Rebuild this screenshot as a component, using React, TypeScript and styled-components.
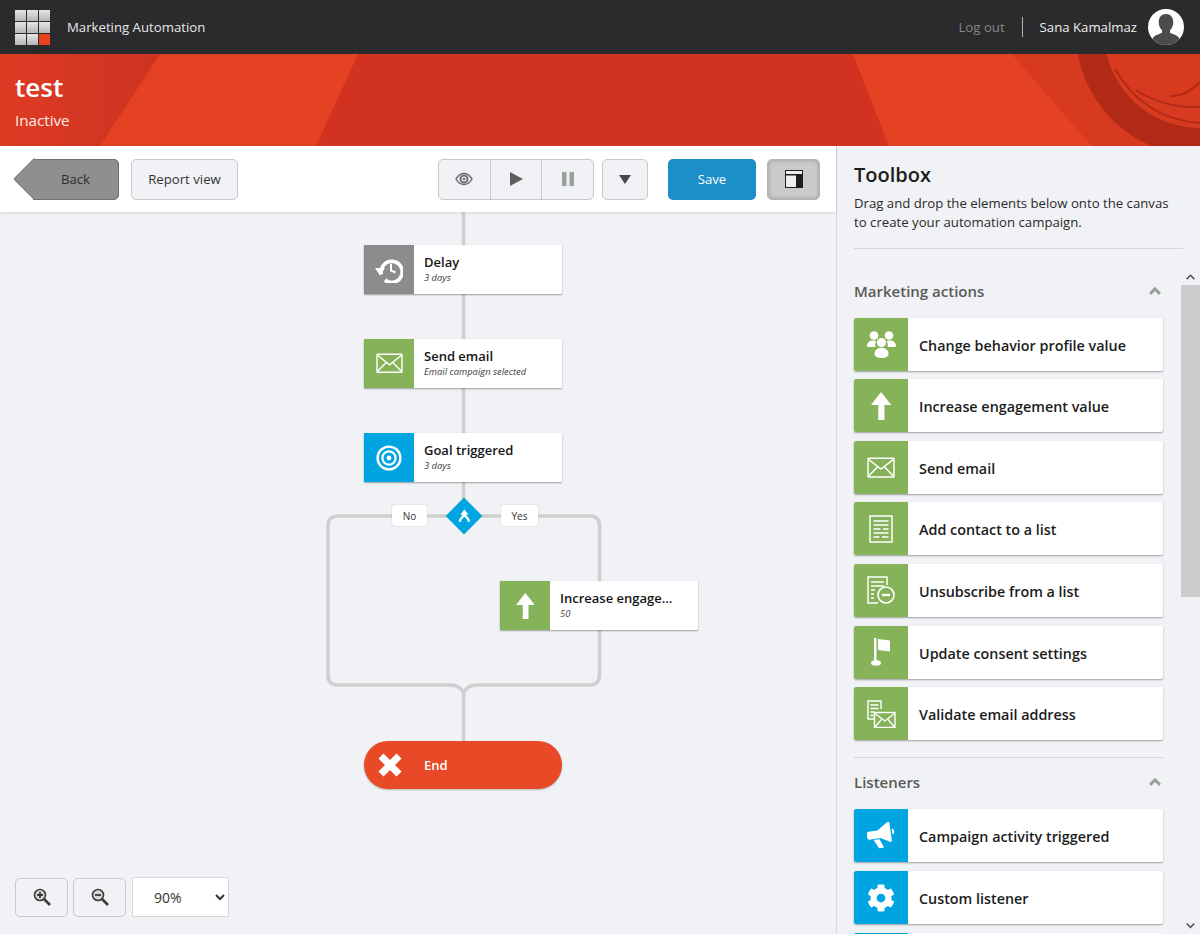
import React from 'react';
import styled, { createGlobalStyle } from 'styled-components';
import { FaCog } from 'react-icons/fa';

const GREEN = '#86b359';
const BLUE = '#00a4e1';
const GREY = '#8c8c8c';
const WIRE = '#cfcfcf';

const GlobalStyle = createGlobalStyle`
  html, body {
    margin: 0;
    padding: 0;
    height: 100%;
    overflow: hidden;
  }
  body {
    font-family: "Open Sans", "Liberation Sans", sans-serif;
    color: #1c1c1c;
    background: #f1f2f5;
  }
  * {
    box-sizing: border-box;
  }
`;

const Page = styled.div`
  display: flex;
  flex-direction: column;
  width: 1200px;
  height: 934px;
  overflow: hidden;
`;

const TopBar = styled.header`
  display: flex;
  align-items: center;
  height: 54px;
  padding: 0 16px 0 15px;
  background: #2b2b2d;
  flex-shrink: 0;
`;

const LogoGrid = styled.div`
  display: grid;
  grid-template-columns: repeat(3, 11px);
  grid-auto-rows: 11px;
  gap: 1px;
  margin-right: 17px;
`;

const LogoCell = styled.span<{ $accent?: boolean }>`
  background: ${(p) => (p.$accent ? '#e8431f' : 'linear-gradient(#e6e6e6, #b5b5b5)')};
`;

const AppName = styled.span`
  font-size: 13.2px;
  color: #e6e8ea;
`;

const UserArea = styled.div`
  display: flex;
  align-items: center;
  margin-left: auto;
`;

const LogOut = styled.a`
  font-size: 13.2px;
  color: #858585;
  padding-right: 17px;
  border-right: 1px solid #b5b5b5;
  line-height: 20px;
  margin-right: 17px;
`;

const UserName = styled.span`
  font-size: 13.2px;
  color: #eeeeee;
  margin-right: 11px;
`;

const Avatar = styled.svg`
  width: 36px;
  height: 36px;
  display: block;
`;

const Hero = styled.section`
  position: relative;
  height: 92px;
  padding: 16px 15px 0;
  background: #d23321;
  overflow: hidden;
  flex-shrink: 0;
`;

const HeroArt = styled.svg`
  position: absolute;
  left: 0;
  top: 0;
`;

const HeroTitle = styled.h1`
  position: relative;
  margin: 0;
  font-size: 26px;
  font-weight: 600;
  line-height: 34px;
  color: #ffffff;
`;

const HeroStatus = styled.div`
  position: relative;
  margin-top: 6px;
  font-size: 15.2px;
  line-height: 20px;
  color: #fbe9e4;
`;

const Body = styled.div`
  display: flex;
  flex: 1;
  min-height: 0;
`;

const Workspace = styled.main`
  display: flex;
  flex-direction: column;
  width: 837px;
  border-right: 1px solid #d9d9d9;
`;

const Toolbar = styled.div`
  display: flex;
  align-items: center;
  height: 66px;
  padding: 0 16px 0 33px;
  background: #ffffff;
  box-shadow: 0 1px 3px rgba(0, 0, 0, 0.12);
  position: relative;
  z-index: 2;
  flex-shrink: 0;
`;

const BackButton = styled.button`
  position: relative;
  width: 86px;
  height: 41px;
  margin-right: 12px;
  padding: 0;
  background: #8f8f8f;
  border: 1px solid #707070;
  border-left: 0;
  border-radius: 0 5px 5px 0;
  font: 13.2px "Open Sans", sans-serif;
  color: #2e2e2e;

  &::before {
    content: '';
    position: absolute;
    left: -14.5px;
    top: 4.5px;
    width: 29px;
    height: 29px;
    background: #8f8f8f;
    border-left: 1px solid #707070;
    border-bottom: 1px solid #707070;
    transform: rotate(45deg);
    border-radius: 0 0 0 3px;
  }

  span {
    position: relative;
  }
`;

const ToolButton = styled.button<{ $width: number }>`
  display: flex;
  align-items: center;
  justify-content: center;
  width: ${(p) => p.$width}px;
  height: 41px;
  padding: 0;
  background: #f1f2f5;
  border: 1px solid #c9c9c9;
  border-radius: 5px;
  font: 13.2px "Open Sans", sans-serif;
  color: #333333;
`;

const ButtonGroup = styled.div`
  display: flex;
  width: 156px;
  margin-left: auto;
  margin-right: 8px;
  height: 41px;
  border: 1px solid #c9c9c9;
  border-radius: 5px;
  background: #f1f2f5;
`;

const GroupButton = styled.button`
  display: flex;
  align-items: center;
  justify-content: center;
  flex: 1;
  padding: 0;
  background: transparent;
  border: 0;
  border-left: 1px solid #c9c9c9;

  &:first-child {
    border-left: 0;
  }
`;

const SaveButton = styled.button`
  width: 88px;
  height: 41px;
  margin: 0 11px 0 20px;
  padding: 0;
  background: #1c8ec8;
  border: 0;
  border-radius: 5px;
  font: 13.2px "Open Sans", sans-serif;
  color: #ffffff;
`;

const PanelToggle = styled.button`
  display: flex;
  align-items: center;
  justify-content: center;
  width: 53px;
  height: 41px;
  padding: 0;
  background: #cacaca;
  border: 1px solid #b4b4b4;
  border-radius: 5px;
  box-shadow: inset 0 0 4px rgba(0, 0, 0, 0.25);
`;

const Canvas = styled.div`
  position: relative;
  flex: 1;
  background: #f1f2f5;
  overflow: hidden;
`;

const Wires = styled.svg`
  position: absolute;
  left: 0;
  top: 0;
`;

const Node = styled.div<{ $x: number; $y: number }>`
  position: absolute;
  left: ${(p) => p.$x}px;
  top: ${(p) => p.$y}px;
  display: flex;
  width: 198px;
  height: 49px;
  background: #ffffff;
  border-radius: 1px;
  box-shadow: 0 1px 2px rgba(0, 0, 0, 0.35);
`;

const NodeIcon = styled.div<{ $color: string }>`
  display: flex;
  align-items: center;
  justify-content: center;
  width: 50px;
  background: ${(p) => p.$color};
  color: #ffffff;
  flex-shrink: 0;
`;

const NodeText = styled.div`
  display: flex;
  flex-direction: column;
  justify-content: center;
  padding: 0 0 2px 10px;
  min-width: 0;
`;

const NodeTitle = styled.div`
  font-size: 13px;
  font-weight: 600;
  line-height: 18px;
  color: #151515;
`;

const NodeSub = styled.div`
  margin-top: 1px;
  font-size: 9.4px;
  font-style: italic;
  line-height: 12px;
  color: #3d3d3d;
`;

const EndNode = styled.div<{ $x: number; $y: number }>`
  position: absolute;
  left: ${(p) => p.$x}px;
  top: ${(p) => p.$y}px;
  display: flex;
  align-items: center;
  width: 198px;
  height: 48px;
  padding-left: 14px;
  border-radius: 24px;
  background: #e84a27;
  box-shadow: 0 1px 2px rgba(0, 0, 0, 0.25);
  font-size: 13px;
  font-weight: 600;
  color: #ffffff;

  span {
    margin-left: 22px;
  }
`;

const BranchTag = styled.div<{ $x: number; $w: number }>`
  position: absolute;
  left: ${(p) => p.$x}px;
  top: 293px;
  display: flex;
  align-items: center;
  justify-content: center;
  width: ${(p) => p.$w}px;
  height: 21px;
  background: #ffffff;
  border-radius: 2px;
  box-shadow: 0 0 1px rgba(0, 0, 0, 0.45);
  font-size: 10px;
  color: #333333;
`;

const Diamond = styled.div`
  position: absolute;
  left: 451px;
  top: 291px;
  display: flex;
  align-items: center;
  justify-content: center;
  width: 26px;
  height: 26px;
  background: ${BLUE};
  transform: rotate(45deg);

  svg {
    transform: rotate(-45deg);
    flex-shrink: 0;
  }
`;

const ZoomBar = styled.div`
  position: absolute;
  left: 15px;
  bottom: 17px;
  display: flex;
  align-items: center;
  gap: 5px;
`;

const ZoomSelect = styled.select`
  width: 97px;
  height: 40px;
  margin-left: 1px;
  padding-left: 17px;
  background: #ffffff;
  border: 1px solid #d6d6d6;
  border-radius: 2px;
  font: 14px "Open Sans", sans-serif;
  color: #333333;
`;

const ZoomButton = styled(ToolButton)`
  height: 39px;
  background: #f1f2f5;
`;

const Toolbox = styled.aside`
  display: flex;
  flex-direction: column;
  flex: 1;
  min-width: 0;
  background: #f1f2f5;
`;

const ToolboxHead = styled.div`
  margin: 0 17px;
  padding: 15px 0 16px;
  border-bottom: 1px solid #d6d6d6;
  flex-shrink: 0;
`;

const ToolboxTitle = styled.h2`
  margin: 0 0 6px;
  font-size: 20px;
  font-weight: 600;
  line-height: 27px;
  color: #1c1c1c;
`;

const ToolboxHint = styled.p`
  margin: 0;
  font-size: 13.2px;
  line-height: 19px;
  color: #2a2a2a;
`;

const ToolboxScroll = styled.div`
  display: flex;
  flex: 1;
  min-height: 0;
  margin-top: 19px;
`;

const ToolList = styled.div`
  flex: 1;
  padding: 0 18px 0 17px;
  overflow: hidden;
`;

const Section = styled.section<{ $divided?: boolean }>`
  display: flex;
  flex-direction: column;
  gap: 8.67px;
  ${(p) => p.$divided && 'margin-top: 16.5px; border-top: 1px solid #d6d6d6;'}
`;

const SectionHead = styled.div<{ $height: number }>`
  display: flex;
  align-items: center;
  justify-content: space-between;
  height: ${(p) => p.$height}px;
  margin-bottom: -8.67px;
  padding: 0 1px 4px 0;
  font-size: 15px;
  font-weight: 600;
  color: #595959;
`;

const ToolItem = styled.div`
  display: flex;
  height: 53px;
  background: #ffffff;
  border-radius: 2px;
  box-shadow: 0 1px 2px rgba(0, 0, 0, 0.35);
  flex-shrink: 0;
`;

const ToolIcon = styled.div<{ $color: string }>`
  display: flex;
  align-items: center;
  justify-content: center;
  width: 54px;
  background: ${(p) => p.$color};
  color: #ffffff;
  border-radius: 2px 0 0 2px;
  flex-shrink: 0;
`;

const ToolLabel = styled.div`
  display: flex;
  align-items: center;
  padding: 2px 0 0 11px;
  font-size: 14.35px;
  font-weight: 600;
  color: #1c1c1c;
`;

const ScrollRail = styled.div`
  display: flex;
  flex-direction: column;
  width: 19px;
  flex-shrink: 0;
`;

const ScrollArrow = styled.div<{ $height: number }>`
  display: flex;
  align-items: center;
  justify-content: center;
  height: ${(p) => p.$height}px;
  flex-shrink: 0;
`;

const ScrollThumb = styled.div`
  height: 312px;
  background: #cdcdcd;
  flex-shrink: 0;
`;

const ScrollGap = styled.div`
  flex: 1;
`;

/* icons */

const Chevron = ({ size = 14, color = '#9a9f9a', width = 3, down = false }) => (
  <svg width={size} height={size * 0.7} viewBox="0 0 14 10" fill="none" stroke={color} strokeWidth={width}>
    <path d={down ? 'M2 2l5 5 5-5' : 'M2 8l5-5 5 5'} />
  </svg>
);

const MailIcon = ({ size = 27 }) => (
  <svg width={size} height={size * 0.76} viewBox="0 0 27 20" fill="none" stroke="currentColor" strokeWidth="1.4">
    <rect x="1" y="1" width="25" height="18" rx="0.5" />
    <path d="M1.5 2l12 9.5 12-9.5M1.5 18l8.5-8.5M25.5 18L17 9.5" />
  </svg>
);

const TargetIcon = () => (
  <svg width="26" height="26" viewBox="0 0 26 26" fill="none" stroke="currentColor">
    <circle cx="13" cy="13" r="11.4" strokeWidth="2.4" />
    <circle cx="13" cy="13" r="6.6" strokeWidth="2.2" />
    <circle cx="13" cy="13" r="2.4" fill="currentColor" stroke="none" />
  </svg>
);

const ArrowUpIcon = ({ size = 26 }) => (
  <svg width={size * 0.72} height={size} viewBox="0 0 18 25" fill="currentColor">
    <path d="M9 0l9 11.5h-6V25H6.500V11.500H0z" />
  </svg>
);

const UsersIcon = () => (
  <svg width="29" height="27" viewBox="0 0 29 27" fill="currentColor">
    <circle cx="7" cy="4.500" r="4.300" />
    <circle cx="22" cy="4.500" r="4.300" />
    <path d="M0 15c0-3.500 2.500-5.500 6-5.500 1.500 0 2.500.4 3.300 1-1 1.300-1.300 3-1 5.500H2c-1.200 0-2-.2-2-1zM29 15c0-3.500-2.500-5.500-6-5.500-1.500 0-2.500.4-3.300 1 1 1.300 1.300 3 1 5.500H27c1.200 0 2-.2 2-1z" />
    <circle cx="14.500" cy="11.500" r="4.600" />
    <path d="M7.500 23c0-4 3-6.300 7-6.300s7 2.300 7 6.300c0 2.500-3 4-7 4s-7-1.500-7-4z" />
  </svg>
);

const ListIcon = () => (
  <svg width="24" height="28" viewBox="0 0 24 28" fill="none" stroke="currentColor">
    <rect x="1" y="1" width="22" height="26" strokeWidth="1.500" />
    <path d="M4.500 6h15M4.500 10h15M4.500 14h7M14 14h5.500M4.500 18h15M4.500 22h6M13 22h6.500" strokeWidth="1.700" />
  </svg>
);

const UnsubscribeIcon = () => (
  <svg width="28" height="29" viewBox="0 0 28 29" fill="none" stroke="currentColor">
    <path d="M11 27H1V1h19v8" strokeWidth="1.500" />
    <path d="M4 6h13M4 10h13M4 14h4M4 18h3M4 22h3" strokeWidth="1.700" />
    <circle cx="19" cy="19" r="8" strokeWidth="1.700" />
    <path d="M15 19h8" strokeWidth="2.400" />
  </svg>
);

const FlagIcon = () => (
  <svg width="20" height="28" viewBox="0 0 20 28" fill="currentColor">
    <path d="M3 0h2.500v23H3z" />
    <path d="M7 1L19 2.500v11L7 12z" />
    <ellipse cx="5" cy="25" rx="5" ry="2.800" />
  </svg>
);

const ValidateIcon = () => (
  <svg width="29" height="28" viewBox="0 0 29 28" fill="none" stroke="currentColor">
    <path d="M8 19H1V1h13v8" strokeWidth="1.400" />
    <path d="M3.500 5h8M3.500 8.500h8M3.500 12h4M3.500 15.500h3" strokeWidth="1.600" />
    <rect x="7.500" y="12.500" width="20.500" height="15" strokeWidth="1.400" />
    <path d="M8 13.500l9.800 7.500 9.700-7.500M8 27l6.500-7.500M27.500 27L21 19.500" strokeWidth="1.300" />
  </svg>
);

const DelayIcon = () => (
  <svg width="28" height="26" viewBox="0 0 28 26" fill="none" stroke="currentColor">
    <path d="M6.500 17.500A10.500 10.500 0 1 1 10 23" strokeWidth="3.600" />
    <path d="M0 11h10l-5 7.500z" fill="currentColor" stroke="none" />
    <path d="M16 7v6.500l4.500 2" strokeWidth="2" />
  </svg>
);

const HornIcon = () => (
  <svg width="28" height="27" viewBox="0 0 28 27" fill="currentColor">
    <g transform="rotate(-8 14 13)">
      <path d="M2 8h9L22 1c1-.6 2 0 2 1v18c0 1-1 1.600-2 1l-9-5H2c-1 0-2-1-2-2v-4c0-1 1-2 2-2z" />
      <path d="M6 17h6l3 8c.2.6-.2 1-.8 1h-3c-.6 0-1-.3-1.200-.8z" />
      <path d="M25.500 8c1.500.5 2 1.500 2 3s-.5 2.500-2 3z" />
    </g>
  </svg>
);

const GearIcon = () => <FaCog size={28} />;

const CrossIcon = () => (
  <svg width="24" height="24" viewBox="0 0 24 24" fill="#ffffff">
    <path d="M5.500 0.500L12 7l6.500-6.500 5 5L17 12l6.500 6.500-5 5L12 17l-6.500 6.500-5-5L7 12 0.500 5.500z" />
  </svg>
);

const SplitIcon = () => (
  <svg width="13" height="14" viewBox="0 0 13 14" fill="none" stroke="#ffffff" strokeWidth="2.400">
    <path d="M6.500 4C6.500 8 2 7.500 2 12.500M6.500 4C6.500 8 11 7.500 11 12.500" />
    <path d="M6.500 0L10.500 5.500H2.500z" fill="#ffffff" stroke="none" />
  </svg>
);

const EyeIcon = () => (
  <svg width="18" height="14" viewBox="0 0 18 14" fill="none" stroke="#6f6f6f">
    <path d="M1 7c2-3.600 4.800-5.500 8-5.500S15 3.400 17 7c-2 3.600-4.800 5.500-8 5.500S3 10.600 1 7z" strokeWidth="1.500" />
    <circle cx="9" cy="7" r="3.500" strokeWidth="2" />
    <circle cx="9" cy="7" r="1.300" fill="#6f6f6f" stroke="none" />
  </svg>
);

const PlayIcon = () => (
  <svg width="13" height="14" viewBox="0 0 13 14" fill="#5e5e5e">
    <path d="M0 0l13 7-13 7z" />
  </svg>
);

const PauseIcon = () => (
  <svg width="12" height="14" viewBox="0 0 12 14" fill="#9aa39a">
    <rect x="0" y="0" width="4.500" height="14" />
    <rect x="7.500" y="0" width="4.500" height="14" />
  </svg>
);

const CaretIcon = () => (
  <svg width="12" height="9" viewBox="0 0 12 9" fill="#484848">
    <path d="M0 0h12L6 9z" />
  </svg>
);

const LayoutIcon = () => (
  <svg width="18" height="18" viewBox="0 0 18 18">
    <rect x="0.500" y="0.500" width="17" height="17" fill="#eceef0" stroke="#1e1e1e" />
    <rect x="0" y="4" width="18" height="1.500" fill="#1e1e1e" />
    <rect x="11" y="4" width="7" height="14" fill="#1e1e1e" />
  </svg>
);

const ZoomIcon = ({ plus = false }) => (
  <svg width="18" height="18" viewBox="0 0 18 18" fill="none" stroke="#3c3c3c">
    <circle cx="7" cy="7" r="5.500" strokeWidth="1.600" fill="#d8d8d8" />
    <path d="M11 11l6 6" strokeWidth="2.600" />
    <path d={plus ? 'M4 7h6M7 4v6' : 'M4 7h6'} strokeWidth="1.800" />
  </svg>
);

const AvatarIcon = () => (
  <Avatar viewBox="0 0 36 36">
    <defs>
      <clipPath id="avatar-clip">
        <circle cx="18" cy="18" r="18" />
      </clipPath>
    </defs>
    <circle cx="18" cy="18" r="18" fill="#ffffff" />
    <g clipPath="url(#avatar-clip)" fill="#4b4b4d">
      <path d="M18 5c4.500 0 7.300 3.300 7.300 8 0 3.500-1.400 6.500-3.300 8.300v2.500c2.500 1.500 7 2.200 9 5 .8 1.200 1 3 1 7.200H4c0-4.200.2-6 1-7.200 2-2.800 6.500-3.500 9-5v-2.500c-1.900-1.800-3.300-4.800-3.300-8.300 0-4.700 2.800-8 7.300-8z" />
    </g>
  </Avatar>
);

const HeroBackdrop = () => (
  <HeroArt width="1200" height="92" viewBox="0 0 1200 92">
    <defs>
      <linearGradient id="hero-left" x1="0" x2="1" y1="0" y2="0">
        <stop offset="0" stopColor="#df3b24" />
        <stop offset="1" stopColor="#cb3321" />
      </linearGradient>
    </defs>
    <rect x="0" y="0" width="165" height="92" fill="url(#hero-left)" />
    <path d="M160 0H358L316 92H100z" fill="#e54224" />
    <path d="M853 0H1012L1092 92H889z" fill="#e54224" />
    <path d="M1012 0H1200V92H1092z" fill="#d83a20" />
    <circle cx="1200" cy="-22" r="110" fill="none" stroke="#b02a15" strokeWidth="28" />
    <path d="M1115 15c18 32 48 52 85 54" fill="none" stroke="#b02a15" strokeWidth="2" />
    <path d="M1136 36c18 12 38 18 64 17" fill="none" stroke="#b02a15" strokeWidth="2" />
    <path d="M1170 42c10 1 20-4 30-14" fill="none" stroke="#b02a15" strokeWidth="2" />
  </HeroArt>
);

const WireLayer = () => (
  <Wires width="836" height="722" viewBox="0 0 836 722" fill="none" stroke={WIRE} strokeWidth="3.500">
    <path d="M463.500 0V304" />
    <path d="M460 304H338Q328 304 328 314V463Q328 473 338 473H450Q460 473 463.500 481" />
    <path d="M467 304H590Q599.500 304 599.500 314V463Q599.500 473 590 473H477Q467 473 463.500 481" />
    <path d="M463.500 481V530" />
  </Wires>
);

const logoCells = [0, 1, 2, 3, 4, 5, 6, 7, 8];

type Tool = { label: string; icon?: React.ReactNode };

const marketingActions: Tool[] = [
  { label: 'Change behavior profile value', icon: <UsersIcon /> },
  { label: 'Increase engagement value', icon: <ArrowUpIcon size={28} /> },
  { label: 'Send email', icon: <MailIcon size={28} /> },
  { label: 'Add contact to a list', icon: <ListIcon /> },
  { label: 'Unsubscribe from a list', icon: <UnsubscribeIcon /> },
  { label: 'Update consent settings', icon: <FlagIcon /> },
  { label: 'Validate email address', icon: <ValidateIcon /> },
];

const listeners: Tool[] = [
  { label: 'Campaign activity triggered', icon: <HornIcon /> },
  { label: 'Custom listener', icon: <GearIcon /> },
  { label: '' },
];

const ToolRow = ({ tool, color }: { tool: Tool; color: string }) => (
  <ToolItem>
    <ToolIcon $color={color}>{tool.icon}</ToolIcon>
    <ToolLabel>{tool.label}</ToolLabel>
  </ToolItem>
);

export default function App() {
  return (
    <Page>
      <GlobalStyle />
      <TopBar>
        <LogoGrid>
          {logoCells.map((c) => (
            <LogoCell key={c} $accent={c === 8} />
          ))}
        </LogoGrid>
        <AppName>Marketing Automation</AppName>
        <UserArea>
          <LogOut>Log out</LogOut>
          <UserName>Sana Kamalmaz</UserName>
          <AvatarIcon />
        </UserArea>
      </TopBar>

      <Hero>
        <HeroBackdrop />
        <HeroTitle>test</HeroTitle>
        <HeroStatus>Inactive</HeroStatus>
      </Hero>

      <Body>
        <Workspace>
          <Toolbar>
            <BackButton>
              <span>Back</span>
            </BackButton>
            <ToolButton $width={107}>Report view</ToolButton>
            <ButtonGroup>
              <GroupButton>
                <EyeIcon />
              </GroupButton>
              <GroupButton>
                <PlayIcon />
              </GroupButton>
              <GroupButton>
                <PauseIcon />
              </GroupButton>
            </ButtonGroup>
            <ToolButton $width={46}>
              <CaretIcon />
            </ToolButton>
            <SaveButton>Save</SaveButton>
            <PanelToggle>
              <LayoutIcon />
            </PanelToggle>
          </Toolbar>

          <Canvas>
            <WireLayer />

            <Node $x={364} $y={33}>
              <NodeIcon $color={GREY}>
                <DelayIcon />
              </NodeIcon>
              <NodeText>
                <NodeTitle>Delay</NodeTitle>
                <NodeSub>3 days</NodeSub>
              </NodeText>
            </Node>

            <Node $x={364} $y={127}>
              <NodeIcon $color={GREEN}>
                <MailIcon />
              </NodeIcon>
              <NodeText>
                <NodeTitle>Send email</NodeTitle>
                <NodeSub>Email campaign selected</NodeSub>
              </NodeText>
            </Node>

            <Node $x={364} $y={221}>
              <NodeIcon $color={BLUE}>
                <TargetIcon />
              </NodeIcon>
              <NodeText>
                <NodeTitle>Goal triggered</NodeTitle>
                <NodeSub>3 days</NodeSub>
              </NodeText>
            </Node>

            <BranchTag $x={392} $w={35}>
              No
            </BranchTag>
            <Diamond>
              <SplitIcon />
            </Diamond>
            <BranchTag $x={501} $w={37}>
              Yes
            </BranchTag>

            <Node $x={500} $y={369}>
              <NodeIcon $color={GREEN}>
                <ArrowUpIcon />
              </NodeIcon>
              <NodeText>
                <NodeTitle>Increase engage...</NodeTitle>
                <NodeSub>50</NodeSub>
              </NodeText>
            </Node>

            <EndNode $x={364} $y={529}>
              <CrossIcon />
              <span>End</span>
            </EndNode>

            <ZoomBar>
              <ZoomButton $width={53}>
                <ZoomIcon plus />
              </ZoomButton>
              <ZoomButton $width={53}>
                <ZoomIcon />
              </ZoomButton>
              <ZoomSelect defaultValue="90%">
                <option>50%</option>
                <option>75%</option>
                <option>90%</option>
                <option>100%</option>
              </ZoomSelect>
            </ZoomBar>
          </Canvas>
        </Workspace>

        <Toolbox>
          <ToolboxHead>
            <ToolboxTitle>Toolbox</ToolboxTitle>
            <ToolboxHint>
              Drag and drop the elements below onto the canvas
              <br />
              to create your automation campaign.
            </ToolboxHint>
          </ToolboxHead>

          <ToolboxScroll>
            <ToolList>
              <Section>
                <SectionHead $height={49.5}>
                  Marketing actions
                  <Chevron />
                </SectionHead>
                {marketingActions.map((t) => (
                  <ToolRow key={t.label} tool={t} color={GREEN} />
                ))}
              </Section>
              <Section $divided>
                <SectionHead $height={51.5}>
                  Listeners
                  <Chevron />
                </SectionHead>
                {listeners.map((t, i) => (
                  <ToolRow key={i} tool={t} color={BLUE} />
                ))}
              </Section>
            </ToolList>
            <ScrollRail>
              <ScrollArrow $height={17}>
                <Chevron size={11} color="#505050" width={2} />
              </ScrollArrow>
              <ScrollThumb />
              <ScrollGap />
              <ScrollArrow $height={17}>
                <Chevron size={11} color="#505050" width={2} down />
              </ScrollArrow>
            </ScrollRail>
          </ToolboxScroll>
        </Toolbox>
      </Body>
    </Page>
  );
}
